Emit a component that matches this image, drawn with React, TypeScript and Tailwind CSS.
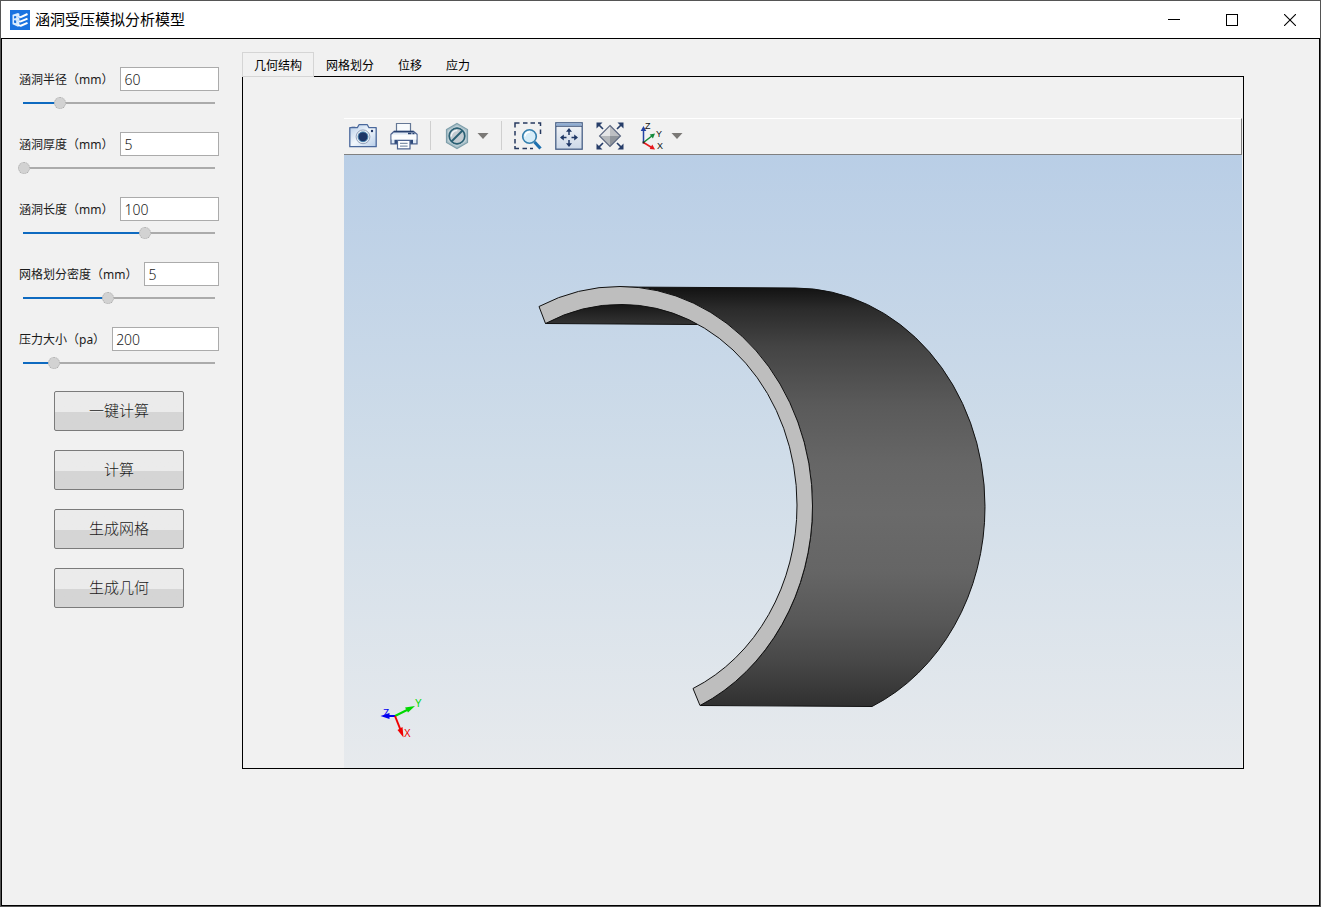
import { useState } from 'react';

const fields = [
  { id: 'radius', label: '涵洞半径（mm）', value: '60', position: 36 },
  { id: 'thickness', label: '涵洞厚度（mm）', value: '5', position: 0 },
  { id: 'length', label: '涵洞长度（mm）', value: '100', position: 121 },
  { id: 'density', label: '网格划分密度（mm）', value: '5', position: 84 },
  { id: 'pressure', label: '压力大小（pa）', value: '200', position: 30 },
];

const actions = ['一键计算', '计算', '生成网格', '生成几何'];
const tabs = ['几何结构', '网格划分', '位移', '应力'];
const SLIDER_MAX = 190;

function ParameterField({ id, label, value, position }: (typeof fields)[number]) {
  const [text, setText] = useState(value);
  const [pos, setPos] = useState(position);
  const filled = `${(pos / SLIDER_MAX) * 100}%`;

  return (
    <div className="flex flex-col gap-1.5">
      <div className="flex h-6 items-center gap-[7px] px-px">
        <label htmlFor={id} className="shrink-0 whitespace-nowrap pt-0.5 text-[12px] leading-6 text-[#1a1a1a]">
          {label}
        </label>
        <input
          id={id}
          type="text"
          value={text}
          onChange={(e) => setText(e.target.value)}
          className="h-6 w-0 flex-1 border border-[#ababab] bg-white px-[3px] text-[14px] leading-5 font-light text-[#1a1a1a] outline-none"
        />
      </div>
      <input
        type="range"
        aria-label={label}
        min={0}
        max={SLIDER_MAX}
        value={pos}
        onChange={(e) => setPos(Number(e.target.value))}
        style={{ backgroundImage: `linear-gradient(to right, #0e6ac0 ${filled}, #ababab ${filled})` }}
        className="h-3 w-full appearance-none bg-[length:calc(100%-10px)_2px] bg-center bg-no-repeat [&::-webkit-slider-thumb]:size-3 [&::-webkit-slider-thumb]:appearance-none [&::-webkit-slider-thumb]:rounded-full [&::-webkit-slider-thumb]:border [&::-webkit-slider-thumb]:border-dotted [&::-webkit-slider-thumb]:border-[#ababab] [&::-webkit-slider-thumb]:bg-[#d2d2d2]"
      />
    </div>
  );
}

function TitleBar() {
  return (
    <header className="flex h-[37px] shrink-0 items-center bg-white pl-[9px] pr-px">
      <svg viewBox="0 0 20 20" className="size-5">
        <rect width="20" height="20" fill="#1a73e0" />
        <path d="M2.5 4.8 8 3l1.400.8v2.400L7.500 6.800 9.400 8v2.200l-1.900.6 1.900 1.200v4L8 16.800l-5.500-2.600z" fill="#d9ecff" />
        <path d="M4 6.300v2.200l2.200-.4V5.900zM4 10.300v2.500l2.200.5v-2.700z" fill="#1a73e0" />
        <path d="M10.200 7.400 17.500 4M10.200 11.700 17.500 8.600M10.200 16l7.300-3.200" stroke="#fff" strokeWidth="2" fill="none" />
        <path d="m8.300 6.300 2.400 1.200M8.300 10.600l2.400 1.200M8.300 15l2.400 1" stroke="#fff" strokeWidth="1.500" />
      </svg>
      <h1 className="ml-[5px] pb-0.5 text-[15px] leading-6 text-black">涵洞受压模拟分析模型</h1>
      <div className="ml-auto flex h-full">
        <button aria-label="最小化" className="flex w-[58px] items-center justify-center">
          <svg viewBox="0 0 12 12" className="size-3" shapeRendering="crispEdges">
            <path d="M0 5.5h12" stroke="#000" />
          </svg>
        </button>
        <button aria-label="最大化" className="flex w-[58px] items-center justify-center">
          <svg viewBox="0 0 12 12" className="size-3" shapeRendering="crispEdges">
            <rect x=".5" y=".5" width="11" height="11" fill="none" stroke="#000" />
          </svg>
        </button>
        <button aria-label="关闭" className="flex w-[58px] items-center justify-center">
          <svg viewBox="0 0 12 12" className="size-3">
            <path d="m0 0 12 12M12 0 0 12" stroke="#000" strokeWidth="1.1" />
          </svg>
        </button>
      </div>
    </header>
  );
}

function DropArrow({ label }: { label: string }) {
  return (
    <button aria-label={label} className="flex h-7 w-3 items-center">
      <svg viewBox="0 0 12 6" className="h-1.5 w-3">
        <path d="M.5 0h11L6 6z" fill="#7b7976" />
      </svg>
    </button>
  );
}

function Toolbar() {
  return (
    <div className="flex h-[37px] items-center gap-[13px] border-t border-r border-b border-t-white border-r-[#808080] border-b-[#808080] pb-0.5 pl-[5px]">
      <button aria-label="截图" className="size-7">
        <svg viewBox="0 0 28 28">
          <defs>
            <linearGradient id="camera-body" x1="0" x2="1" y1="0" y2="1">
              <stop offset="0" stopColor="#b5cce8" />
              <stop offset=".5" stopColor="#f2f7fc" />
              <stop offset="1" stopColor="#b5cce8" />
            </linearGradient>
          </defs>
          <path d="M.8 5.7h7.500l1.700-3h8.300l1.700 3h7.200v19H.8z" fill="url(#camera-body)" stroke="#4a689c" strokeWidth="1.300" strokeLinejoin="round" />
          <path d="M2.500 5.200h3.800" stroke="#4a689c" />
          <circle cx="14" cy="14.800" r="6.900" fill="#e8edf3" stroke="#8a9bb8" strokeWidth=".9" />
          <circle cx="14" cy="14.800" r="4.900" fill="#1c3466" stroke="#3f7fae" strokeWidth=".9" />
          <circle cx="23" cy="9" r="1.200" fill="#1f3566" />
        </svg>
      </button>
      <button aria-label="打印" className="size-7">
        <svg viewBox="0 0 28 28">
          <path d="M6.500 10V1.500h14V10" fill="#f7fafc" stroke="#647795" strokeWidth="1.200" />
          <path d="M4 9.500h19.500l3.500 2.800v9.500H1V12.300z" fill="#dfe9f4" stroke="#4e6490" strokeWidth="1.300" />
          <path d="M4 9.600h19.500" stroke="#26406f" strokeWidth="1.500" />
          <path d="M1.600 12.600h24.800v5H1.600z" fill="#fbfcfd" />
          <path d="M18 11.600h6.500" stroke="#26406f" strokeWidth="1.500" strokeDasharray="3.400 1" />
          <path d="M4.500 17.800h18.500v4H4.500z" fill="#2e497a" />
          <path d="M7.500 18.500h12.500v8.300H7.500z" fill="#fff" stroke="#4e6490" strokeWidth="1.200" />
          <path d="M10 21.300h7.600M10 24.100h7.600" stroke="#8495ab" strokeWidth="1.200" />
        </svg>
      </button>
      <span className="-mx-px h-[29px] w-px bg-[#cfcfcf]" />
      <div className="flex items-center gap-1.5">
        <button aria-label="选择过滤" className="size-7">
          <svg viewBox="0 0 28 28">
            <path d="M14 1.500 24.500 7.500v13L14 26.500 3.500 20.500v-13z" fill="#a9c0c9" stroke="#7f9fab" strokeWidth="1.200" />
            <path d="M14 4 22.300 8.800v10.400L14 24l-8.300-4.800V8.800z" fill="none" stroke="#c5d5db" />
            <circle cx="14" cy="14" r="7.800" fill="#c4ccd2" stroke="#2b6074" strokeWidth="1.700" />
            <path d="M8.500 19.500 19.500 8.500" stroke="#2b6074" strokeWidth="1.900" />
            <path d="M8.200 14.500a5.800 5.800 0 0 1 6-6" stroke="#f2f5f7" strokeWidth="1.400" fill="none" />
          </svg>
        </button>
        <DropArrow label="过滤选项" />
      </div>
      <span className="-mx-px h-[29px] w-px bg-[#cfcfcf]" />
      <button aria-label="框选缩放" className="size-7">
        <svg viewBox="0 0 28 28">
          <path
            d="M1 5.500V1h4.500M9 1h4.500M16.500 1h4.500M24 1h2.500v3M26.500 7.500v4.500M1 9v4.500M1 17v4.500M1 24v2.500h4M8.500 26.500h4.500M16 26.500h3"
            fill="none"
            stroke="#26395f"
            strokeWidth="1.500"
          />
          <path d="m20.500 20 6 6.500" stroke="#1c6fae" strokeWidth="3.200" />
          <circle cx="15.500" cy="14.500" r="6.800" fill="#d7edf8" stroke="#347fae" strokeWidth="1.600" />
          <path d="M11 14.500a4.500 4.500 0 0 1 5-4.500" fill="none" stroke="#fff" strokeWidth="1.600" />
        </svg>
      </button>
      <button aria-label="平移" className="size-7">
        <svg viewBox="0 0 28 28">
          <defs>
            <linearGradient id="pan-body" x1="0" x2="0" y1="0" y2="1">
              <stop offset="0" stopColor="#f4f5f7" />
              <stop offset="1" stopColor="#ccd8e8" />
            </linearGradient>
          </defs>
          <rect x=".8" y=".8" width="26.400" height="26.400" fill="url(#pan-body)" stroke="#475f86" strokeWidth="1.300" />
          <path d="M1.500 1.500h25v2.300h-25z" fill="#8fadd4" />
          <path d="M1 4.300h26" stroke="#2f456d" strokeWidth=".9" />
          <path d="M14 13V8M14 18v5M11.500 15.500h-5M16.500 15.500h5" stroke="#1f3766" strokeWidth="1.500" />
          <path d="m14 6 3 3.800h-6zM14 25l3-3.800h-6zM5 15.500l3.800-3v6zM23 15.500l-3.800-3v6z" fill="#1f3766" />
        </svg>
      </button>
      <button aria-label="适应窗口" className="size-7">
        <svg viewBox="0 0 28 28">
          <path d="M14 3.500 24.500 14H3.500z" fill="#e4e5e7" />
          <path d="M14 3.500V14h10.500z" fill="#bdbfc3" />
          <path d="M3.500 14h21L14 24.500z" fill="#8f949b" />
          <path d="M3.500 14H14v10.500z" fill="#b5b8bc" />
          <path d="M14 3.500 24.500 14 14 24.500 3.500 14z" fill="none" stroke="#5c6780" strokeWidth="1.100" />
          <path d="m2 2 5 5M26 2l-5 5M2 26l5-5M26 26l-5-5" stroke="#263d69" strokeWidth="1.700" />
          <path d="M.5.5h6l-6 6zM27.500.5h-6l6 6zM.5 27.500h6l-6-6zM27.500 27.500h-6l6-6z" fill="#263d69" />
        </svg>
      </button>
      <div className="flex items-center gap-1.5">
        <button aria-label="视图方向" className="size-7">
          <svg viewBox="0 0 28 28" fontFamily="Liberation Sans, sans-serif" fontSize="9" className="overflow-visible">
            <path d="M6.500 20.500V6" stroke="#2343a5" strokeWidth="1.500" />
            <path d="m6.500 4 2.800 5H3.700z" fill="#2343a5" />
            <path d="m6.500 20.500 9-7" stroke="#128a3a" strokeWidth="1.500" />
            <path d="m18 11.500-5.300.9 3.200 4z" fill="#128a3a" />
            <path d="m6.500 20.500 9 5.500" stroke="#e8171b" strokeWidth="1.500" />
            <path d="m18 27.500-5.300-.6 2.600-4.500z" fill="#e8171b" />
            <path d="M5.500 19.500h2v2h-2z" fill="#222" />
            <text x="8" y="6.500" fill="#111">Z</text>
            <text x="19" y="14.500" fill="#111">Y</text>
            <text x="20" y="27" fill="#111">X</text>
          </svg>
        </button>
        <DropArrow label="视图选项" />
      </div>
    </div>
  );
}

// Culvert section: front ring face, outer shell and a sliver of the inner wall
function CulvertView() {
  return (
    <svg
      viewBox="344 155 898 613"
      className="block h-auto w-full bg-linear-to-b from-[#b9cee6] via-[#d0dde9] to-[#e7eaed]"
      role="img"
      aria-label="涵洞几何结构"
    >
      <defs>
        <linearGradient id="shell" gradientUnits="userSpaceOnUse" x1="800" y1="288" x2="800" y2="706">
          <stop offset="0" stopColor="#131313" />
          <stop offset=".05" stopColor="#2b2b2b" />
          <stop offset=".14" stopColor="#444444" />
          <stop offset=".28" stopColor="#5a5a5a" />
          <stop offset=".42" stopColor="#666666" />
          <stop offset=".54" stopColor="#6a6a6a" />
          <stop offset=".68" stopColor="#656565" />
          <stop offset=".8" stopColor="#575757" />
          <stop offset=".9" stopColor="#464646" />
          <stop offset="1" stopColor="#303030" />
        </linearGradient>
        <linearGradient id="inner-wall" x1="0" x2="0" y1="0" y2="1">
          <stop offset="0" stopColor="#161616" />
          <stop offset="1" stopColor="#343434" />
        </linearGradient>
      </defs>
      <g stroke="#111" strokeWidth="1" strokeLinejoin="round">
        <path d="M545.500 323.500 697 324.500 680 304H560z" fill="url(#inner-wall)" />
        <path
          d="M620 287 795 288A190 218.500 0 0 1 985 506.500 190 218.500 0 0 1 872 706.500L700 705.500A192.500 219.500 0 0 0 812.500 506 192.500 219.500 0 0 0 620 287z"
          fill="url(#shell)"
        />
        <path
          d="M539 306.500A192.500 219.500 0 0 1 620 286.500 192.500 219.500 0 0 1 812.500 506 192.500 219.500 0 0 1 700 705.500L693 688.500A175 200.500 0 0 0 797 505 175 200.500 0 0 0 622 304.500 175 200.500 0 0 0 545.500 323.500z"
          fill="#bebebe"
        />
      </g>
      <g fontFamily="Liberation Sans, sans-serif" fontSize="10">
        <path d="m395 716 12-6" stroke="#00d800" strokeWidth="2" />
        <path d="m415 706-10 1.500 3 5z" fill="#00d800" />
        <path d="M395 716h-8" stroke="#0000f0" strokeWidth="2" />
        <path d="m380.500 716 9-3v6z" fill="#0000f0" />
        <path d="m395 716 6 15" stroke="#f00000" strokeWidth="2" />
        <path d="m403.500 737.500-6-7.500 5-3z" fill="#f00000" />
        <text x="415" y="707" fill="#00d800">Y</text>
        <text x="383" y="717" fill="#0000f0">Z</text>
        <text x="404" y="737" fill="#f00000">X</text>
      </g>
    </svg>
  );
}

export default function App() {
  const [activeTab, setActiveTab] = useState(0);

  return (
    <div className="flex min-h-screen flex-col border border-[#555555] bg-[#f1f1f1] font-['Noto_Sans','Noto_Sans_CJK_SC',sans-serif]">
      <TitleBar />
      <main className="flex flex-1 items-start border border-black">
        <aside className="w-60 shrink-0 pl-4 pr-[22px] pt-7">
          <div className="flex flex-col gap-[23px]">
            {fields.map((field) => (
              <ParameterField key={field.id} {...field} />
            ))}
          </div>
          <div className="mt-[22px] flex flex-col items-center gap-[19px]">
            {actions.map((action) => (
              <button
                key={action}
                className="h-10 w-[130px] rounded-xs border border-[#7b7b7b] bg-linear-to-b from-[#ebebeb] from-52% to-[#d5d5d5] to-52% pb-0.5 text-[15px] leading-5 font-light text-[#1a1a1a]"
              >
                {action}
              </button>
            ))}
          </div>
        </aside>

        <section className="mr-[75px] min-w-0 flex-1 pt-[13px]">
          <div role="tablist" className="relative z-10 flex h-[25px]">
            {tabs.map((tab, i) => (
              <button
                key={tab}
                role="tab"
                aria-selected={i === activeTab}
                onClick={() => setActiveTab(i)}
                className={`px-[11px] pt-0.5 text-[12px] leading-5 text-black ${
                  i === activeTab ? 'border border-[#d5d5d5] bg-[#f1f1f1]' : 'border border-transparent'
                }`}
              >
                {tab}
              </button>
            ))}
          </div>
          <div role="tabpanel" className="-mt-px border border-black pl-[101px] pr-px pt-[41px]">
            <Toolbar />
            <CulvertView />
          </div>
        </section>
      </main>
    </div>
  );
}
